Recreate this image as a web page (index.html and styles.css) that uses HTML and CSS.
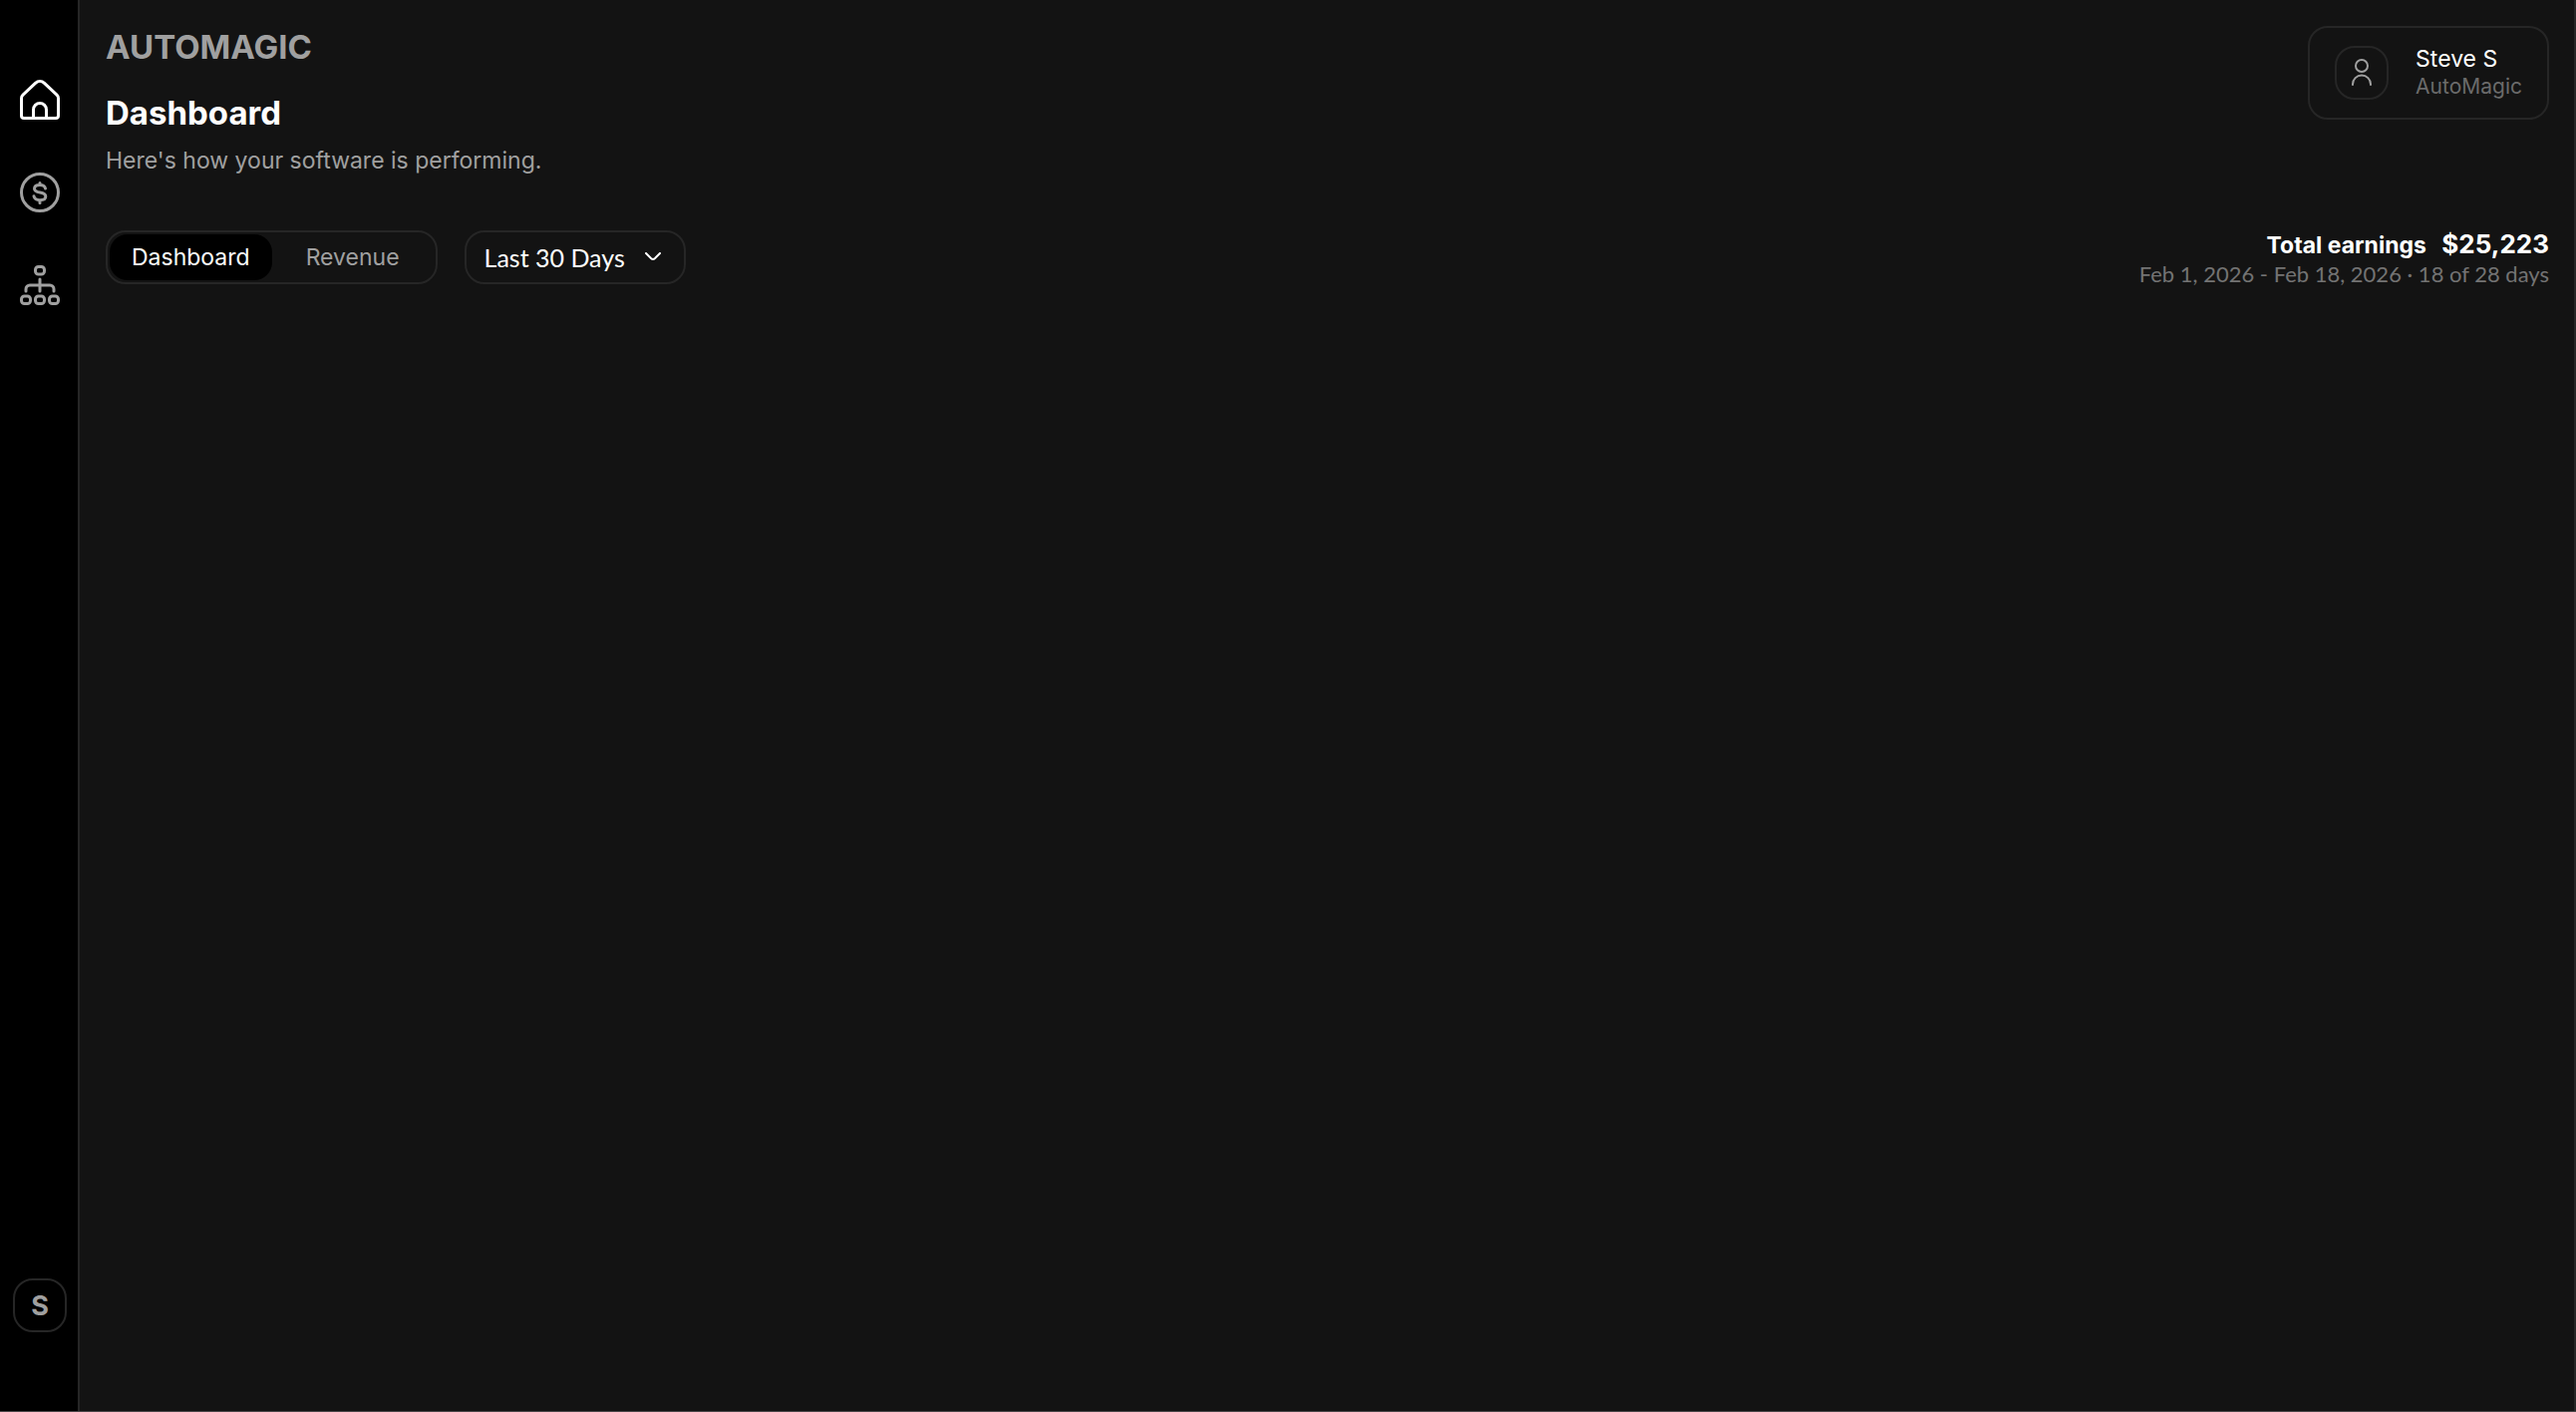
FILE: index.html
```html
<!DOCTYPE html>
<html lang="en">
<head>
    <meta charset="UTF-8">
    <meta name="viewport" content="width=device-width, initial-scale=1.0">
    <title>Dashboard - AutoMagic</title>
    <link rel="stylesheet" href="styles.css">
</head>
<body>

<aside class="sidebar">
    <nav class="sidebar-nav">
        <a href="#home" class="active" aria-label="Home">
            <svg viewBox="0 0 40 40" fill="none" stroke="currentColor" stroke-width="3">
                <path d="M1.5 18.5c0-1.400.5-2.500 1.500-3.400L15.500 3.400c2.600-2.500 6.400-2.500 9 0L37 15.100c1 .9 1.500 2 1.500 3.400V36a2.500 2.500 0 0 1-2.500 2.500H4A2.500 2.500 0 0 1 1.500 36z"/>
                <path d="M13.500 38V30a6.500 6.500 0 0 1 13 0v8"/>
            </svg>
        </a>
        <a href="#revenue" aria-label="Revenue">
            <svg viewBox="0 0 40 40" fill="none" stroke="currentColor" stroke-width="3" stroke-linecap="round">
                <circle cx="20" cy="20" r="18.500"/>
                <path d="M25.500 16c-.5-2.500-2.500-3.500-5.500-3.500-3.300 0-5.500 1.300-5.500 3.700 0 5.600 11.300 2 11.300 7.800 0 2.300-2.300 3.700-5.800 3.700-3.300 0-5.500-1.400-6-3.900M20 10.500v2M20 28v2.500"/>
            </svg>
        </a>
        <a href="#team" aria-label="Team">
            <svg viewBox="0 0 40 40" fill="none" stroke="currentColor" stroke-width="3" stroke-linecap="round">
                <rect x="15.500" y="1.500" width="9" height="7.500" rx="3"/>
                <rect x="1.500" y="31" width="9" height="7.500" rx="3"/>
                <rect x="15.500" y="31" width="9" height="7.500" rx="3"/>
                <rect x="29.500" y="31" width="9" height="7.500" rx="3"/>
                <path d="M20 14v12M6 26v-2a4 4 0 0 1 4-4h20a4 4 0 0 1 4 4v2"/>
            </svg>
        </a>
    </nav>
    <button type="button" class="avatar">S</button>
</aside>

<main class="content">
    <header class="page-header">
        <div class="titles">
            <p class="brand">AUTOMAGIC</p>
            <h1>Dashboard</h1>
            <p class="subtitle">Here's how your software is performing.</p>
        </div>
        <button type="button" class="profile">
            <span class="profile-icon">
                <svg viewBox="0 0 28 28" fill="none" stroke="currentColor" stroke-width="2" stroke-linecap="round">
                    <circle cx="14" cy="7" r="6"/>
                    <path d="M5 26v-.5a9 9 0 0 1 18 0v.5"/>
                </svg>
            </span>
            <span class="profile-text">
                <span class="profile-name">Steve S</span>
                <span class="profile-org">AutoMagic</span>
            </span>
        </button>
    </header>

    <div class="toolbar">
        <div class="tabs">
            <button type="button" class="tab selected">Dashboard</button>
            <button type="button" class="tab">Revenue</button>
        </div>
        <div class="period">
            <select aria-label="Period">
                <option>Last 30 Days</option>
            </select>
            <svg viewBox="0 0 16 8" fill="none" stroke="currentColor" stroke-width="2" stroke-linecap="round">
                <path d="M1 1l5 5c1.300 1.200 2.700 1.200 4 0l5-5"/>
            </svg>
        </div>
        <div class="earnings">
            <p class="total">Total earnings <strong>$25,223</strong></p>
            <p class="range">Feb 1, 2026 - Feb 18, 2026 · 18 of 28 days</p>
        </div>
    </div>
</main>

</body>
</html>
```
FILE: styles.css
```css
* {
    box-sizing: border-box;
}
body {
    display: flex;
    min-height: 100vh;
    margin: 0;
    font-family: Inter, sans-serif;
    font-size: 23px;
    background-color: #131313;
    color: white;
    border-bottom: 1px solid #4a4648;
}
h1, p {
    margin: 0;
}
button, select {
    font: inherit;
    color: inherit;
    background: none;
    cursor: pointer;
}
svg {
    display: block;
}
.sidebar {
    display: flex;
    flex-direction: column;
    align-items: center;
    justify-content: space-between;
    flex: none;
    width: 80px;
    padding: 80px 0 79px 2px;
    background-color: black;
    border-right: 2px solid #262626;
}
.sidebar-nav {
    display: flex;
    flex-direction: column;
    gap: 53px;
}
.sidebar-nav a {
    color: #a0a0a0;
}
.sidebar-nav a.active {
    color: white;
}
.sidebar-nav svg {
    width: 40px;
    height: 40px;
}
.avatar {
    width: 54px;
    height: 54px;
    padding: 0;
    border: 2px solid #262626;
    border-radius: 20px;
    font-size: 27px;
    font-weight: 700;
    color: #a0a0a0;
}
.content {
    flex: 1;
    padding: 26px 25px 26px 26px;
    border-right: 2px solid #262626;
}
.page-header {
    display: flex;
    justify-content: space-between;
    align-items: flex-start;
}
.brand, h1 {
    font-size: 33px;
    font-weight: 700;
    line-height: 42px;
}
.brand {
    color: #a0a0a0;
}
h1 {
    margin-top: 24px;
}
.subtitle {
    margin-top: 11px;
    line-height: 32px;
    color: #a0a0a0;
}
.profile {
    display: flex;
    align-items: center;
    gap: 27px;
    padding: 18px 25px;
    border: 2px solid #262626;
    border-radius: 20px;
    text-align: left;
}
.profile-icon {
    display: flex;
    align-items: center;
    justify-content: center;
    width: 54px;
    height: 54px;
    border: 2px solid #262626;
    border-radius: 20px;
    color: #a0a0a0;
}
.profile-icon svg {
    width: 28px;
    height: 28px;
}
.profile-text {
    display: flex;
    flex-direction: column;
    line-height: 27px;
}
.profile-org {
    font-size: 21px;
    color: #6b6b6b;
}
.toolbar {
    display: flex;
    align-items: flex-start;
    gap: 27px;
    margin-top: 54px;
}
.tabs {
    display: flex;
    height: 54px;
    padding: 2px;
    border: 2px solid #262626;
    border-radius: 20px;
}
.tab {
    padding: 0 34px;
    border: none;
    border-radius: 18px;
    color: #a0a0a0;
}
.tab.selected {
    padding: 0 22px;
    background-color: black;
    color: white;
}
.period {
    position: relative;
}
.period select {
    width: 222px;
    height: 54px;
    padding: 0 18px;
    appearance: none;
    border: 2px solid #262626;
    border-radius: 20px;
    font-family: Lato, sans-serif;
    font-size: 25px;
}
.period svg {
    position: absolute;
    top: 22px;
    right: 25px;
    width: 16px;
    height: 8px;
    pointer-events: none;
}
.earnings {
    margin-left: auto;
    text-align: right;
}
.total {
    font-weight: 700;
    line-height: 28px;
}
.total strong {
    margin-left: 10px;
    font-size: 26px;
    font-weight: 700;
}
.range {
    font-family: Lato, sans-serif;
    font-size: 22px;
    line-height: 30px;
    color: #737373;
}
```
